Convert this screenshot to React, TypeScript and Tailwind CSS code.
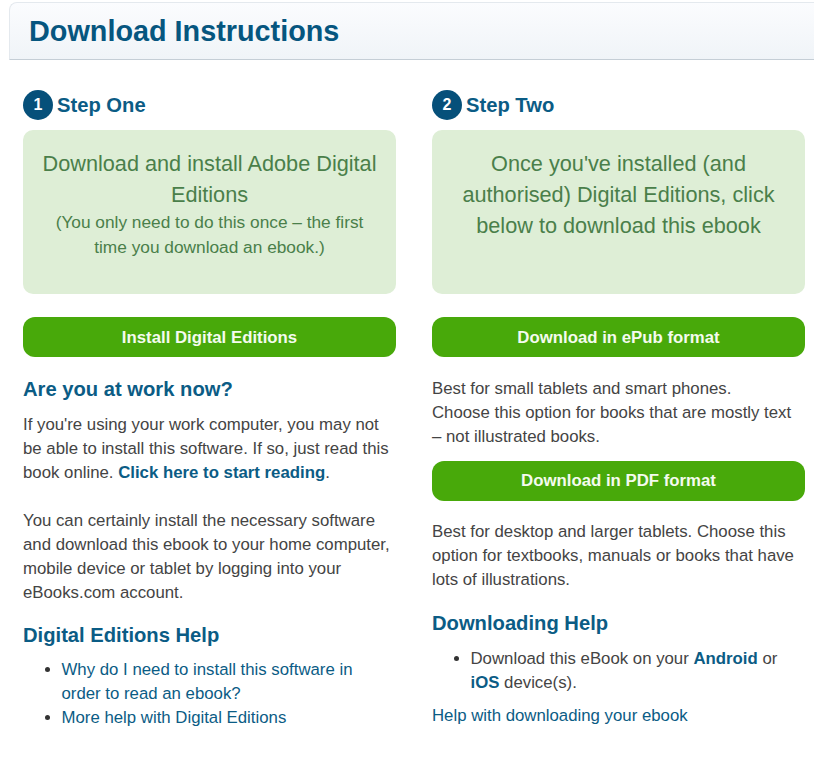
export default function App() {
  const link = "text-[#0b5c85]";
  const h3 = "text-[20.2px] leading-[24px] font-bold text-[#0b5c85]";
  const btn = "h-[40px] pt-[1px] rounded-[12px] bg-[#48a90a] text-[#f4fbee] font-bold flex items-center justify-center";
  return (
    <div className="w-[827px] h-[759px] bg-white overflow-hidden font-['Liberation_Sans',Arial,sans-serif] text-[16.8px] leading-[24px] text-[#444444]">
      <div className="ml-[9px] mt-[2px] w-[805px] h-[58px] pl-[20px] rounded-tl-[8px] border-t border-l border-[#e4e9ee] border-b border-b-[#c5ced6] bg-gradient-to-b from-[#fbfcfe] to-[#f0f4f8] flex items-center">
        <h1 className="-ml-px text-[28.8px] leading-[36px] font-bold text-[#06567f]">Download Instructions</h1>
      </div>
      <div className="flex gap-[36px] pl-[23px] pt-[30px]">
        <div className="w-[373px]">
          <div className="flex items-center gap-[4px] h-[30px]">
            <span className="w-[30px] h-[30px] rounded-full bg-[#06507a] text-white text-[16px] font-bold flex items-center justify-center">1</span>
            <span className="text-[20.2px] font-bold text-[#0b5c85]">Step One</span>
          </div>
          <div className="mt-[10px] h-[164px] rounded-[10px] bg-[#deeed6] text-[#4a7f4a] text-center px-[15px] pt-[18px]">
            <div className="text-[21.7px] leading-[31px]">Download and install Adobe Digital Editions</div>
            <div className="px-[12px] text-[17.3px] leading-[25px]">(You only need to do this once – the first time you download an ebook.)</div>
          </div>
          <div className={`mt-[23px] ${btn}`}>Install Digital Editions</div>
          <h3 className={`mt-[20px] ${h3}`}>Are you at work now?</h3>
          <p className="mt-[12px]">If you're using your work computer, you may not be able to install this software. If so, just read this book online. <a className="font-bold text-[#0b5c85]">Click here to start reading</a>.</p>
          <p className="mt-[24px]">You can certainly install the necessary software and download this ebook to your home computer, mobile device or tablet by logging into your eBooks.com account.</p>
          <h3 className={`mt-[18px] ${h3}`}>Digital Editions Help</h3>
          <ul className="mt-[11px] pl-[38.5px] pr-[30px] list-disc marker:text-[#333333]">
            <li><a className={link}>Why do I need to install this software in order to read an ebook?</a></li>
            <li><a className={link}>More help with Digital Editions</a></li>
          </ul>
        </div>
        <div className="w-[373px]">
          <div className="flex items-center gap-[4px] h-[30px]">
            <span className="w-[30px] h-[30px] rounded-full bg-[#06507a] text-white text-[16px] font-bold flex items-center justify-center">2</span>
            <span className="text-[20.2px] font-bold text-[#0b5c85]">Step Two</span>
          </div>
          <div className="mt-[10px] h-[164px] rounded-[10px] bg-[#deeed6] text-[#4a7f4a] text-center px-[15px] pt-[18px]">
            <div className="text-[21.7px] leading-[31px]">Once you've installed (and authorised) Digital Editions, click below to download this ebook</div>
          </div>
          <div className={`mt-[23px] ${btn}`}>Download in ePub format</div>
          <p className="mt-[20px]">Best for small tablets and smart phones.<br />Choose this option for books that are mostly text – not illustrated books.</p>
          <div className={`mt-[12px] h-[40px] rounded-[12px] bg-[#48a90a] text-[#f4fbee] font-bold flex items-center justify-center`}>Download in PDF format</div>
          <p className="mt-[19px]">Best for desktop and larger tablets. Choose this option for textbooks, manuals or books that have lots of illustrations.</p>
          <h3 className={`mt-[19px] ${h3}`}>Downloading Help</h3>
          <ul className="mt-[12px] pl-[38.5px] pr-[20px] list-disc marker:text-[#333333]">
            <li>Download this eBook on your <a className="font-bold text-[#0b5c85]">Android</a> or <a className="font-bold text-[#0b5c85]">iOS</a> device(s).</li>
          </ul>
          <p className="mt-[9px]"><a className={link}>Help with downloading your ebook</a></p>
        </div>
      </div>
    </div>
  );
}
